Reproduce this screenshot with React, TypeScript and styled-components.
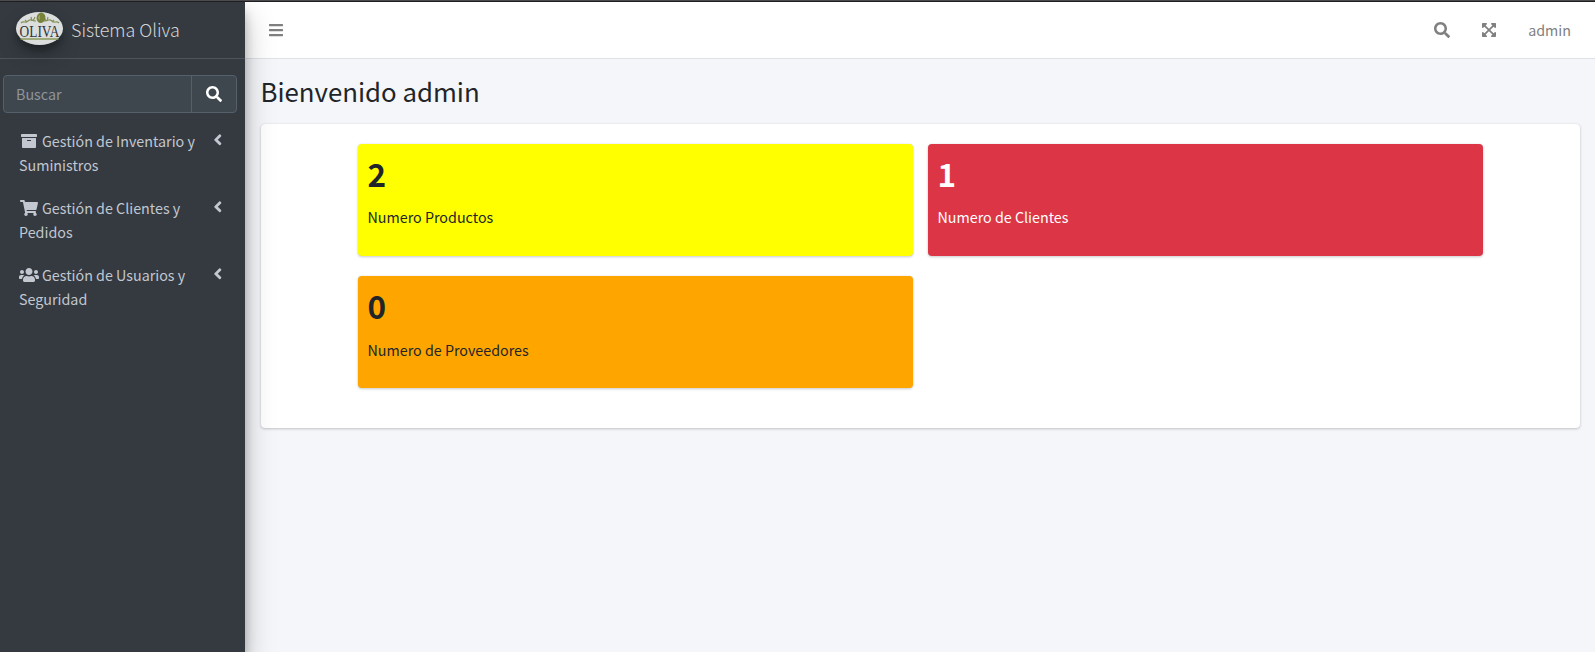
import React from 'react';
import styled, { createGlobalStyle } from 'styled-components';
import {
  FaAngleLeft,
  FaArchive,
  FaBars,
  FaExpandArrowsAlt,
  FaSearch,
  FaShoppingCart,
  FaUsers,
} from 'react-icons/fa';

const GlobalStyle = createGlobalStyle`
  *, *::before, *::after { box-sizing: border-box; }
  body {
    margin: 0;
    background: #f4f6f9;
    color: #212529;
    font-family: "Noto Sans CJK SC", "Noto Sans", sans-serif;
    font-size: 14.3px;
    line-height: 24px;
    overflow: hidden;
  }
`;

const Page = styled.div`
  display: flex;
  flex-direction: column;
  height: 100vh;
`;

const TopEdge = styled.div`
  flex: none;
  height: 2px;
  background: #1f1d20;
  border-top: 1px solid #4b4a4c;
  position: relative;
  z-index: 2;
`;

const Shell = styled.div`
  display: flex;
  flex: 1;
  min-height: 0;
`;

const Sidebar = styled.aside`
  position: relative;
  z-index: 1;
  flex: none;
  width: 245px;
  background: #343a40;
  box-shadow: 0 14px 28px rgba(0, 0, 0, 0.25), 0 10px 10px rgba(0, 0, 0, 0.22);
  color: #c2c7d0;
`;

const Brand = styled.div`
  display: flex;
  align-items: center;
  height: 57px;
  padding: 0 0 3px 16px;
  border-bottom: 1px solid #4b545c;
`;

const Logo = styled.svg`
  display: block;
  overflow: visible;
  width: 47px;
  height: 33px;
  border-radius: 50%;
  box-shadow: 0 10px 20px rgba(0, 0, 0, 0.19), 0 6px 6px rgba(0, 0, 0, 0.23);
`;

const BrandName = styled.span`
  margin-left: 8px;
  font-family: "Noto Sans CJK SC Light", "Noto Sans CJK SC", sans-serif;
  font-size: 17.9px;
  font-weight: 300;
  color: rgba(255, 255, 255, 0.8);
  white-space: nowrap;
`;

const SearchGroup = styled.div`
  display: flex;
  width: 234px;
  height: 38px;
  margin: 16px 0 0 3px;
  border: 1px solid #56606a;
  border-radius: 4px;
  background: #3f474e;
  overflow: hidden;
`;

const SearchInput = styled.input`
  flex: 1;
  min-width: 0;
  padding: 0 12px;
  border: 0;
  outline: 0;
  background: transparent;
  color: #fff;
  font: inherit;
  &::placeholder {
    color: #8f959b;
    opacity: 1;
  }
`;

const SearchButton = styled.button`
  display: flex;
  align-items: center;
  justify-content: center;
  width: 45px;
  padding: 0;
  border: 0;
  border-left: 1px solid #56606a;
  background: transparent;
  color: #fff;
  font-size: 16px;
`;

const Menu = styled.nav`
  display: flex;
  flex-direction: column;
  gap: 19px;
  padding: 16px 24px 0 19px;
`;

const MenuItem = styled.a`
  display: flex;
  justify-content: space-between;
  color: #c2c7d0;
`;

const MenuLabel = styled.span`
  width: 184px;
`;

const MenuIcon = styled.span<{ $width: number }>`
  display: inline-flex;
  justify-content: center;
  width: 20px;
  margin-right: 3px;
  vertical-align: -2px;
  line-height: 1;
  svg {
    flex: none;
    width: ${(p) => p.$width}px;
    height: 16px;
  }
`;

const Arrow = styled.span`
  display: flex;
  height: 18px;
  margin: 2px -5.5px 0 0;
  font-size: 17.6px;
`;

const Main = styled.div`
  flex: 1;
  min-width: 0;
`;

const Navbar = styled.header`
  display: flex;
  align-items: center;
  height: 57px;
  padding: 0 24px 1px 23px;
  background: #fff;
  border-bottom: 1px solid #dee2e6;
  color: #808080;
  font-size: 16px;
`;

const NavActions = styled.div`
  display: flex;
  align-items: center;
  margin-left: auto;
  gap: 31px;
`;

const UserName = styled.span`
  font-size: 14.3px;
`;

const Content = styled.main`
  padding: 14px 15px 0 16px;
`;

const Title = styled.h1`
  margin: 0 0 15px -0.5px;
  font-size: 25.8px;
  font-weight: 400;
  line-height: 36px;
`;

const Panel = styled.section`
  display: grid;
  grid-template-columns: 555px 555px;
  grid-auto-rows: 112px;
  gap: 20.4px 15px;
  justify-content: center;
  height: 304px;
  padding-top: 20px;
  border-radius: 4px;
  background: #fff;
  box-shadow: 0 0 1px rgba(0, 0, 0, 0.125), 0 1px 3px rgba(0, 0, 0, 0.2);
`;

const StatCard = styled.article<{ $bg: string; $fg: string }>`
  padding: 8px 9.5px;
  border-radius: 4px;
  background: ${(p) => p.$bg};
  color: ${(p) => p.$fg};
  box-shadow: 0 0 1px rgba(0, 0, 0, 0.125), 0 1px 3px rgba(0, 0, 0, 0.2);
`;

const StatValue = styled.h3`
  margin: 0 0 11.3px;
  font-size: 31.5px;
  font-weight: 700;
  line-height: 42px;
`;

const StatLabel = styled.p`
  margin: 0;
`;

const menu = [
  { icon: <FaArchive />, width: 16, text: 'Gestión de Inventario y Suministros' },
  { icon: <FaShoppingCart />, width: 18, text: 'Gestión de Clientes y Pedidos' },
  { icon: <FaUsers />, width: 20, text: 'Gestión de Usuarios y Seguridad' },
];

const stats = [
  { value: 2, label: 'Numero Productos', bg: '#ffff00', fg: '#212529' },
  { value: 1, label: 'Numero de Clientes', bg: '#dc3545', fg: '#ffffff' },
  { value: 0, label: 'Numero de Proveedores', bg: '#ffa500', fg: '#212529' },
];

function OlivaLogo() {
  return (
    <Logo viewBox="0 0 47 33">
      <ellipse cx="23.5" cy="16.5" rx="23.5" ry="16.5" fill="#dcdedd" />
      <g fill="none" stroke="#84925a" strokeWidth="1.2">
        <path d="M5 11c3-3 4 1 7-2s4 0 8 0M43 11c-3-3-4 1-7-2s-4 0-8 0" />
        <path d="M9 8l2 2M15 5l1 4M19 5l-2 4M38 8l-2 2M32 5l-1 4M28 5l2 4" />
      </g>
      <ellipse cx="25" cy="5.8" rx="4.4" ry="5.2" fill="#79823b" transform="rotate(12 25 5.8)" />
      <path d="M23.5 3.5q-1 2 0 4" fill="none" stroke="#a9ae67" strokeWidth="1.2" />
      <text
        x="3.5"
        y="24.5"
        textLength="40"
        lengthAdjust="spacingAndGlyphs"
        fontFamily="Liberation Serif, serif"
        fontSize="16.5"
        fill="#30353a"
      >
        OLIVA
      </text>
      <path d="M4.5 27h38" stroke="#8a9a5b" strokeWidth="1.5" />
    </Logo>
  );
}

export default function App() {
  return (
    <Page>
      <GlobalStyle />
      <TopEdge />
      <Shell>
        <Sidebar>
          <Brand>
            <OlivaLogo />
            <BrandName>Sistema Oliva</BrandName>
          </Brand>
          <SearchGroup>
            <SearchInput placeholder="Buscar" />
            <SearchButton aria-label="Buscar">
              <FaSearch />
            </SearchButton>
          </SearchGroup>
          <Menu>
            {menu.map((item) => (
              <MenuItem key={item.text}>
                <MenuLabel>
                  <MenuIcon $width={item.width}>{item.icon}</MenuIcon>
                  {item.text}
                </MenuLabel>
                <Arrow>
                  <FaAngleLeft />
                </Arrow>
              </MenuItem>
            ))}
          </Menu>
        </Sidebar>
        <Main>
          <Navbar>
            <FaBars />
            <NavActions>
              <FaSearch />
              <FaExpandArrowsAlt />
              <UserName>admin</UserName>
            </NavActions>
          </Navbar>
          <Content>
            <Title>Bienvenido admin</Title>
            <Panel>
              {stats.map((s) => (
                <StatCard key={s.label} $bg={s.bg} $fg={s.fg}>
                  <StatValue>{s.value}</StatValue>
                  <StatLabel>{s.label}</StatLabel>
                </StatCard>
              ))}
            </Panel>
          </Content>
        </Main>
      </Shell>
    </Page>
  );
}
